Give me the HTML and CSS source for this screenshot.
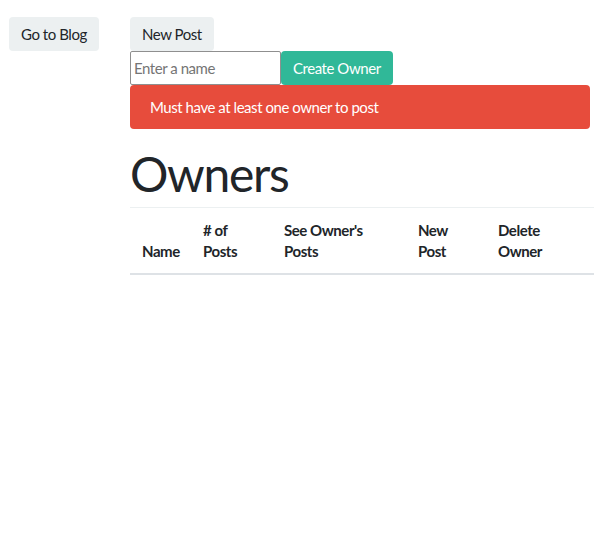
FILE: index.html
```html
<!DOCTYPE html>
<html>
<head>
<meta charset="utf-8">
<link rel="stylesheet" href="styles.css">
</head>
<body>
<div class="layout">
  <aside class="sidebar">
    <button class="btn btn-light">Go to Blog</button>
  </aside>
  <main class="main">
    <div class="row-top">
      <button class="btn btn-light">New Post</button>
    </div>
    <form class="owner-form">
      <input class="name-input" type="text" placeholder="Enter a name">
      <button class="btn btn-success" type="button">Create Owner</button>
    </form>
    <div class="alert">Must have at least one owner to post</div>
    <h1 class="title">Owners</h1>
    <table class="owners-table">
      <thead>
        <tr>
          <th class="c-name">Name</th>
          <th class="c-posts"># of Posts</th>
          <th class="c-see">See Owner's Posts</th>
          <th class="c-new">New Post</th>
          <th class="c-del">Delete Owner</th>
        </tr>
      </thead>
      <tbody></tbody>
    </table>
  </main>
</div>
</body>
</html>
```
FILE: styles.css
```css
* { box-sizing: border-box; }
html, body { margin: 0; padding: 0; background: #fff; }
body {
  font-family: Lato, "Noto Sans", sans-serif;
  font-size: 15px;
  letter-spacing: -0.45px;
  color: #212529;
}
.layout { display: flex; align-items: flex-start; }
.sidebar { width: 130px; padding: 17px 0 0 9px; }
.main { width: 464px; padding-top: 17px; display: flex; flex-direction: column; align-items: flex-start; }
.btn {
  font-family: Lato, "Noto Sans", sans-serif;
  font-size: 15px;
  letter-spacing: -0.45px;
  line-height: 22px;
  padding: 6px 12px;
  height: 34px;
  border: 0;
  border-radius: 4px;
  cursor: pointer;
}
.btn-light { background: #ecf0f1; color: #212529; }
.btn-success { background: #30b898; color: #fff; }
.owner-form { display: flex; margin: 0; }
.name-input {
  width: 151px;
  height: 34px;
  border: 1px solid #8f8f8f;
  border-radius: 2px;
  padding: 0 3px;
  font-family: Lato, "Noto Sans", sans-serif;
  font-size: 15px;
  letter-spacing: -0.45px;
  color: #212529;
}
.name-input::placeholder { color: #757575; }
.alert {
  width: 460px;
  background: #e74c3c;
  color: #fff;
  border-radius: 4px;
  padding: 11px 20px;
  line-height: 22px;
  margin-bottom: 16px;
}
.title {
  font-size: 48px;
  letter-spacing: -1.3px;
  font-weight: 400;
  line-height: 57px;
  margin: 0 0 5px;
}
.owners-table {
  width: 464px;
  border-collapse: collapse;
  table-layout: fixed;
}
.owners-table th {
  text-align: left;
  vertical-align: bottom;
  font-weight: 700;
  line-height: 21px;
  padding: 12px 12px 11px;
  border-top: 1px solid #ecf0f1;
  border-bottom: 2px solid #dee2e6;
}
.c-name { width: 61px; }
.c-posts { width: 81px; }
.c-see { width: 134px; }
.c-new { width: 80px; }
.c-del { width: 108px; }
```
